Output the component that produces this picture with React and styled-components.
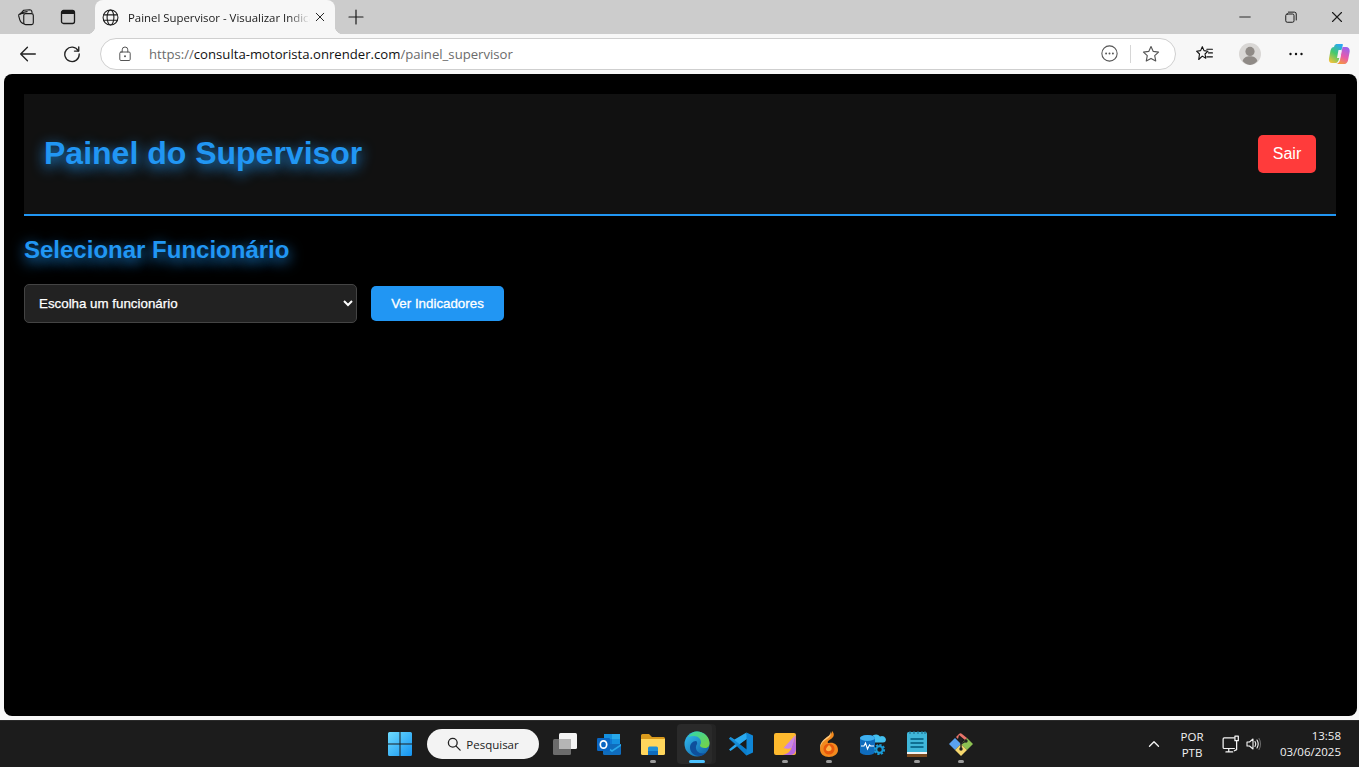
import React from "react";
import styled, { createGlobalStyle } from "styled-components";

const GlobalStyle = createGlobalStyle`
  html, body {
    margin: 0;
    padding: 0;
    height: 100%;
    overflow: hidden;
    background: #f7f7f7;
  }
  * { box-sizing: border-box; }
`;

const Desktop = styled.div`
  width: 100%;
  height: 100vh;
  display: flex;
  flex-direction: column;
  font-family: "Open Sans", "Noto Sans", sans-serif;
`;

/* browser chrome */
const TabStrip = styled.div`
  height: 34px;
  flex: none;
  display: flex;
  align-items: center;
  background: #cccccc;
`;

const StripLeft = styled.div`
  display: flex;
  align-items: center;
  gap: 10px;
  padding-left: 10px;
  margin-right: 11px;
`;

const IconSlot = styled.div`
  width: ${(p) => p.$w || 32}px;
  height: ${(p) => p.$h || 32}px;
  margin-left: ${(p) => p.$ml || 0}px;
  flex: none;
  display: flex;
  align-items: center;
  justify-content: center;
`;

const Tab = styled.div`
  position: relative;
  align-self: flex-end;
  width: 240px;
  height: 34px;
  display: flex;
  align-items: center;
  padding: 0 5px 0 6px;
  background: #f7f7f7;
  border-radius: 8px 8px 0 0;

  &::before,
  &::after {
    content: "";
    position: absolute;
    bottom: 0;
    width: 8px;
    height: 8px;
  }
  &::before {
    left: -8px;
    background: radial-gradient(circle at 0 0, transparent 8px, #f7f7f7 8.5px);
  }
  &::after {
    right: -8px;
    background: radial-gradient(circle at 100% 0, transparent 8px, #f7f7f7 8.5px);
  }
`;

const TabTitle = styled.div`
  flex: 1;
  margin-left: 9px;
  font-size: 11.4px;
  color: #1a1a1a;
  white-space: nowrap;
  overflow: hidden;
  -webkit-mask-image: linear-gradient(to right, #000 88%, transparent 100%);
  mask-image: linear-gradient(to right, #000 88%, transparent 100%);
`;

const WindowButtons = styled.div`
  margin-left: auto;
  margin-right: -1px;
  display: flex;
`;

const Toolbar = styled.div`
  height: 37px;
  flex: none;
  display: flex;
  align-items: center;
  background: #f7f7f7;
  padding: 2px 0 0 12px;
`;

const NavButtons = styled.div`
  display: flex;
  gap: 12px;
  margin-right: 12px;
`;

const AddressBar = styled.div`
  width: 1076px;
  height: 32px;
  flex: none;
  display: flex;
  align-items: center;
  background: #ffffff;
  border: 1px solid #cfcfcf;
  border-radius: 16px;
  padding: 0 15px 0 16px;
`;

const Url = styled.div`
  margin-left: 16px;
  font-size: 13.15px;
  color: #6b6b6b;
  white-space: nowrap;

  b {
    font-weight: 400;
    color: #111111;
  }
`;

const AddressActions = styled.div`
  margin-left: auto;
  display: flex;
  align-items: center;
  gap: 11.5px;
`;

const Divider = styled.div`
  width: 1px;
  height: 18px;
  background: #d6d6d6;
`;

const ToolActions = styled.div`
  display: flex;
  align-items: center;
  margin-left: 12px;
  gap: 14px;
`;

/* page */
const Viewport = styled.main`
  flex: 1;
  min-height: 0;
  margin: 3px 2px 4px 4px;
  padding: 20px 21px 20px 20px;
  background: #000000;
  border-radius: 8px;
  font-family: "Liberation Sans", Arial, sans-serif;
  color: #ffffff;
`;

const Header = styled.header`
  height: 122px;
  display: flex;
  align-items: center;
  justify-content: space-between;
  padding: 0 20px;
  background: #111111;
  border-bottom: 2px solid #2196f3;
`;

const Title = styled.h1`
  margin: 0 0 2px;
  font-size: 32px;
  font-weight: 700;
  color: #2196f3;
  text-shadow: 0 4px 14px #2196f3;
`;

const LogoutButton = styled.button`
  width: 58px;
  height: 38px;
  padding: 0;
  border: none;
  border-radius: 5px;
  background: #ff3b3b;
  color: #ffffff;
  font-family: inherit;
  font-size: 16px;
`;

const SectionTitle = styled.h2`
  margin: 20px 0 21px;
  font-size: 24px;
  line-height: 27px;
  font-weight: 700;
  color: #2196f3;
  text-shadow: 0 4px 14px #2196f3;
`;

const FilterRow = styled.form`
  display: flex;
  align-items: center;
  gap: 14px;
`;

const EmployeeSelect = styled.select`
  width: 333px;
  height: 39px;
  padding: 0 10px;
  background: #222222;
  color: #ffffff;
  border: 1px solid #444444;
  border-radius: 5px;
  font-family: inherit;
  font-size: 13.33px;
  -webkit-text-stroke: 0.25px #ffffff;
`;

const PrimaryButton = styled.button`
  width: 133px;
  height: 35px;
  border: none;
  border-radius: 5px;
  background: #2196f3;
  color: #ffffff;
  font-family: inherit;
  font-size: 13.33px;
  -webkit-text-stroke: 0.3px #ffffff;
`;

/* taskbar */
const Taskbar = styled.footer`
  position: relative;
  height: 47px;
  flex: none;
  display: flex;
  align-items: center;
  justify-content: flex-end;
  background: #1c1c1c;
  border-top: 1px solid #2b2b2b;
`;

const TaskIcons = styled.div`
  position: absolute;
  left: 378px;
  top: 0;
  height: 46px;
  display: flex;
  align-items: center;
`;

const TaskItem = styled.div`
  position: relative;
  width: 44px;
  height: 40px;
  display: flex;
  align-items: center;
  justify-content: center;

  &::before {
    content: "";
    display: ${(p) => (p.$active ? "block" : "none")};
    position: absolute;
    left: 2px;
    top: 0;
    bottom: 0;
    width: 35px;
    border-radius: 4px;
    background: #2a2a2a;
    box-shadow: 4px 0 0 #242424;
  }

  &::after {
    content: "";
    display: ${(p) => (p.$open || p.$active ? "block" : "none")};
    position: absolute;
    bottom: 1px;
    left: 50%;
    transform: translateX(-50%);
    width: ${(p) => (p.$active ? 16 : 6)}px;
    height: 3px;
    border-radius: 2px;
    background: ${(p) => (p.$active ? "#4cc2ff" : "#9a9a9a")};
  }

  svg {
    position: relative;
  }
`;

const SearchBox = styled.div`
  width: 112px;
  height: 30px;
  margin: 0 4px 0 5px;
  flex: none;
  display: flex;
  align-items: center;
  justify-content: center;
  gap: 5px;
  border-radius: 15px;
  background: #f3f3f3;
  color: #222222;
  font-size: 11.5px;
`;

const Tray = styled.div`
  display: flex;
  align-items: center;
  color: #f2f2f2;
  padding-right: 18px;
`;

const Lang = styled.div`
  width: 40px;
  margin-left: 12px;
  padding-top: 1px;
  text-align: center;
  font-size: 11.5px;
  line-height: 16px;
`;

const Clock = styled.div`
  width: 70px;
  margin-left: 9px;
  text-align: right;
  font-size: 11.5px;
  line-height: 16px;
`;

const stroke = { fill: "none", stroke: "currentColor", strokeWidth: 1.2, strokeLinecap: "round", strokeLinejoin: "round" };

const Svg = ({ size = 16, color = "#1a1a1a", children, box = 16 }) => (
  <svg width={size} height={size} viewBox={`0 0 ${box} ${box}`} style={{ color, display: "block" }}>
    {children}
  </svg>
);

const WorkspacesIcon = () => (
  <Svg size={18}>
    <g {...stroke} strokeWidth="1">
      <path d="M4.500 3.500 6 2l5.500-.5c.8 0 1.300.4 1.500 1l.4 1.500" />
      <path d="M2.800 5.500 3.600 4.200 9 3.200" />
      <rect x="6" y="5" width="8.500" height="9.800" rx="1.600" />
      <path d="M6 14c-1.700-.4-3-1.600-3.500-3.400L1.500 7c-.2-1 .3-1.600 1.200-1.800L6 4.600" />
    </g>
  </Svg>
);

const TabsIcon = () => (
  <Svg size={16}>
    <rect x="1.500" y="1.500" width="13" height="13" rx="2" fill="none" stroke="currentColor" strokeWidth="1.300" />
    <path d="M1.500 3.500a2 2 0 0 1 2-2h9a2 2 0 0 1 2 2v1.500h-13z" fill="currentColor" />
  </Svg>
);

const GlobeIcon = () => (
  <Svg size={17}>
    <g {...stroke} strokeWidth="1">
      <circle cx="8" cy="8" r="7" />
      <ellipse cx="8" cy="8" rx="3.200" ry="7" />
      <path d="M1.600 5.500h12.800M1.600 10.500h12.800" />
    </g>
  </Svg>
);

const CloseIcon = ({ size = 12 }) => (
  <Svg size={size}>
    <path d="M2 2l12 12M14 2 2 14" {...stroke} strokeWidth="1.500" />
  </Svg>
);

const PlusIcon = () => (
  <Svg size={16}>
    <path d="M8 1v14M1 8h14" {...stroke} />
  </Svg>
);

const BackIcon = () => (
  <Svg size={18} color="#222">
    <path d="M1.500 8h13M7.500 2 1.500 8l6 6" {...stroke} />
  </Svg>
);

const ReloadIcon = () => (
  <Svg size={18} color="#222">
    <path d="M13.600 5.200A6.400 6.400 0 1 0 14.400 8" {...stroke} />
    <path d="M14 1.600v3.800h-3.800" {...stroke} />
  </Svg>
);

const LockIcon = () => (
  <Svg size={16} color="#555">
    <g {...stroke} strokeWidth="1">
      <rect x="2.800" y="6" width="10.400" height="8.500" rx="1.200" />
      <path d="M5.200 6V3.800a2.800 2.800 0 0 1 5.600 0V6" />
    </g>
    <circle cx="8" cy="10.200" r="1" fill="currentColor" />
  </Svg>
);

const MoreCircleIcon = () => (
  <Svg size={17} color="#555">
    <circle cx="8" cy="8" r="7.200" {...stroke} strokeWidth="1" />
    <circle cx="4.800" cy="8" r=".9" fill="currentColor" />
    <circle cx="8" cy="8" r=".9" fill="currentColor" />
    <circle cx="11.200" cy="8" r=".9" fill="currentColor" />
  </Svg>
);

const StarIcon = () => (
  <Svg size={18} color="#555">
    <path d="M8 1.400l2 4.300 4.700.6-3.400 3.200.9 4.700L8 11.900l-4.200 2.300.9-4.700L1.300 6.300 6 5.700z" {...stroke} strokeWidth="1" />
  </Svg>
);

const FavoritesIcon = () => (
  <Svg size={18} color="#111">
    <path d="M6.500 1.500 8 5l3.600.5-2.700 2.500.7 3.700-3.100-1.800-3.200 3 .7-4.900L1.400 5.500 5 5z" {...stroke} strokeWidth="1" />
    <path d="M10.500 3.800h5M12 7h3.500M10.500 10.500h5" {...stroke} strokeWidth="1" />
  </Svg>
);

const ProfileIcon = () => (
  <svg width="22" height="22" viewBox="0 0 22 22" style={{ display: "block" }}>
    <circle cx="11" cy="11" r="11" fill="#d9d7d5" />
    <circle cx="11" cy="8.400" r="4.600" fill="#8f8a86" />
    <path d="M3.600 18c1-3.400 4-4.800 7.400-4.800s6.400 1.400 7.400 4.800A11 11 0 0 1 11 22a11 11 0 0 1-7.400-4z" fill="#8f8a86" />
  </svg>
);

const DotsIcon = () => (
  <Svg size={16} color="#111">
    <circle cx="2.500" cy="8" r="1.200" fill="currentColor" />
    <circle cx="8" cy="8" r="1.200" fill="currentColor" />
    <circle cx="13.500" cy="8" r="1.200" fill="currentColor" />
  </Svg>
);

const CopilotIcon = () => (
  <svg width="22" height="22" viewBox="0 0 22 22" style={{ display: "block" }}>
    <defs>
      <linearGradient id="cpL" x1="0.700" y1="0" x2="0.200" y2="1">
        <stop offset="0" stopColor="#2aa7f2" />
        <stop offset="0.500" stopColor="#45c96b" />
        <stop offset="1" stopColor="#f2c23a" />
      </linearGradient>
      <linearGradient id="cpR" x1="0.700" y1="0" x2="0.300" y2="1">
        <stop offset="0" stopColor="#9b62ee" />
        <stop offset="0.550" stopColor="#e85ba8" />
        <stop offset="1" stopColor="#f59a3a" />
      </linearGradient>
    </defs>
    <path d="M6.500 2.500C7 1.500 8 1 9 1h5c.8 0 1 .6.8 1.300L11 16c-.5 2-1.500 4-3.500 4H4C1.500 20 .5 18 1 15.500l1.500-8C3 5 4.500 4 6 4z" fill="url(#cpL)" />
    <path d="M14.500 4H18c2.500 0 4 2 3.700 4.500l-1.700 9c-.5 1.500-1.500 3.500-3.500 3.500H8c2 0 3.500-2 4-4z" fill="url(#cpR)" />
    <path d="M10.500 7h3l-1.500 8H9z" fill="#f6eef8" />
  </svg>
);

const MinIcon = () => (
  <Svg size={12}>
    <path d="M1 8h14" {...stroke} />
  </Svg>
);

const RestoreIcon = () => (
  <Svg size={12}>
    <g {...stroke} strokeWidth="1.300">
      <rect x="1" y="4" width="11" height="11" rx="2" />
      <path d="M4.500 1.500h8a2.500 2.500 0 0 1 2.500 2.500v8" />
    </g>
  </Svg>
);

const WindowsLogo = () => (
  <svg width="24" height="24" viewBox="0 0 24 24" style={{ display: "block" }}>
    <defs>
      <linearGradient id="winG" x1="0" y1="0" x2="1" y2="1">
        <stop offset="0" stopColor="#6fdcff" />
        <stop offset="1" stopColor="#1493f0" />
      </linearGradient>
    </defs>
    <path d="M0 1.500A1.500 1.500 0 0 1 1.500 0h10v11.500H0zM12.500 0h10A1.500 1.500 0 0 1 24 1.500v10H12.500zM0 12.500h11.500V24h-10A1.500 1.500 0 0 1 0 22.500zM12.500 12.500H24v10a1.500 1.500 0 0 1-1.500 1.500h-10z" fill="url(#winG)" />
  </svg>
);

const SearchIcon = () => (
  <Svg size={14} color="#222">
    <circle cx="6.600" cy="6.600" r="5" {...stroke} strokeWidth="1.500" />
    <path d="M10.400 10.400 15 15" {...stroke} strokeWidth="1.500" />
  </Svg>
);

const TaskViewIcon = () => (
  <svg width="24" height="22" viewBox="0 0 24 22" style={{ display: "block" }}>
    <rect x="0" y="6" width="18" height="16" rx="1.500" fill="#6b6b6b" />
    <rect x="6" y="0" width="18" height="16" rx="1.500" fill="#f4f4f4" />
    <rect x="6" y="6" width="12" height="10" fill="#b5b5b5" />
  </svg>
);

const OutlookIcon = () => (
  <svg width="24" height="24" viewBox="0 0 24 24" style={{ display: "block" }}>
    <rect x="7" y="2" width="16" height="10" fill="#1490df" />
    <rect x="15" y="2" width="8" height="5" fill="#28a8ea" />
    <rect x="7" y="7" width="8" height="6" fill="#0f78d4" />
    <path d="M6 12h18v9.500a1.500 1.500 0 0 1-1.500 1.500H7.500A1.500 1.500 0 0 1 6 21.500z" fill="#0f6cbd" />
    <path d="M6 12l9 6 9-6v2l-9 6-9-6z" fill="#28a8ea" />
    <rect x="0" y="6" width="13" height="13" rx="1.200" fill="#0a66c2" />
    <ellipse cx="6.500" cy="12.500" rx="3.200" ry="3.700" fill="none" stroke="#fff" strokeWidth="1.700" />
  </svg>
);

const ExplorerIcon = () => (
  <svg width="24" height="24" viewBox="0 0 24 24" style={{ display: "block" }}>
    <path d="M0 3.500A1.500 1.500 0 0 1 1.500 2H8l3 3h11.500A1.500 1.500 0 0 1 24 6.500V8H0z" fill="#d99a1c" />
    <path d="M0 7h24v14.500a1.500 1.500 0 0 1-1.500 1.500h-21A1.500 1.500 0 0 1 0 21.500z" fill="#ffd65c" />
    <path d="M7 16a1.500 1.500 0 0 1 1.500-1.500h7A1.500 1.500 0 0 1 17 16v7H7z" fill="#1f8fd8" />
    <rect x="7" y="19" width="10" height="4" fill="#0f6cbd" />
  </svg>
);

const EdgeIcon = () => (
  <svg width="26" height="26" viewBox="0 0 26 26" style={{ display: "block" }}>
    <defs>
      <linearGradient id="edA" x1="0" y1="0" x2="1" y2="1">
        <stop offset="0" stopColor="#35c1f1" />
        <stop offset="1" stopColor="#0c59a4" />
      </linearGradient>
      <linearGradient id="edB" x1="0" y1="0" x2="1" y2="1">
        <stop offset="0" stopColor="#2fd5b0" />
        <stop offset="1" stopColor="#7bd23c" />
      </linearGradient>
    </defs>
    <circle cx="13" cy="13" r="12.500" fill="url(#edA)" />
    <path d="M4 6C6.500 2.500 9.500.5 13 .5c6.500 0 12.500 5 12.500 11.500 0 2.500-1 5-4.500 5-3 0-5-1-5-2.500 0-1 1-1.500 1-3.500 0-3-3-6-7-6-2 0-4 .5-6 1z" fill="url(#edB)" />
    <path d="M12 10c-3.500 0-6 3-6 6.500 0 4.500 4 8.500 9 8.500 2.500 0 5-1 7-3-3 1-7 .5-9-2-1.500-2-1.500-5 0-7 .5-.8-.2-3-1-3z" fill="#0e4f9c" />
  </svg>
);

const VscodeIcon = () => (
  <svg width="24" height="24" viewBox="0 0 24 24" style={{ display: "block" }}>
    <path d="M17.500.5 24 3.500v17l-6.500 3-10-10 10-11.500zm0 6.500L10.500 12l7 5.500z" fill="#0f86d6" />
    <path d="M17.500.5V7L5 16.500l-3.500 2.500L0 17.500 6.500 12 0 6.500 1.500 5l4 2.500z" fill="#29a9ef" />
    <path d="M1.500 5 17.500 17.500V23.500L0 7z" fill="#0a77c2" opacity=".55" />
  </svg>
);

const StickyIcon = () => (
  <svg width="22" height="22" viewBox="0 0 22 22" style={{ display: "block" }}>
    <rect x="0" y="0" width="22" height="22" rx="2" fill="#fdb92e" />
    <path d="M21.500 2 22 16c0 3-2 6-5 6H9c4-1 7-3 8.500-7z" fill="#b668e0" />
    <path d="M21.500 2 17.500 15c-2 1-5 1-8 0z" fill="#c985ea" />
  </svg>
);

const FlameIcon = () => (
  <svg width="22" height="26" viewBox="0 0 22 26" style={{ display: "block" }}>
    <path d="M14 0c3 3 2 6-1 8C9 10 9 12 11 12c4-1 9 1 9 7 0 4-4 7-9 7s-9-3-9-8c0-5 3-8 6-11 3-2 6-4 6-7z" fill="#f28a1e" />
    <path d="M12 0c1 3-1 5-3 6C5 9 2 12 2 17c1-4 3-7 7-9 3-2 5-4 3-8z" fill="#ffc97a" />
    <circle cx="11" cy="18" r="5.500" fill="#e8590c" />
    <path d="M11 14c2 1.500 3 3 2.500 4.500S10 21 8.500 19.500 9 16 11 14z" fill="#ffb347" />
  </svg>
);

const AzureIcon = () => (
  <svg width="26" height="26" viewBox="0 0 26 26" style={{ display: "block" }}>
    <path d="M11 8a5 5 0 0 1 9-2.500A4 4 0 0 1 26 9a3 3 0 0 1-3 2.500H12z" fill="#43c0ef" />
    <path d="M0 7c0-1.500 3-3 7.500-3S15 5.500 15 7v14c0 1.500-3 3-7.500 3S0 22.500 0 21z" fill="#0f6cbd" />
    <ellipse cx="7.500" cy="7" rx="7.500" ry="3" fill="#3fb0ef" />
    <path d="M1 15h3l1.500-3 2 6 2-4 1 1h3.500" fill="none" stroke="#fff" strokeWidth="1.100" />
    <circle cx="19.500" cy="18.500" r="4.200" fill="none" stroke="#1a9bd7" strokeWidth="2.800" strokeDasharray="2 1.200" />
    <circle cx="19.500" cy="18.500" r="3.200" fill="none" stroke="#1a9bd7" strokeWidth="2" />
  </svg>
);

const NotepadIcon = () => (
  <svg width="20" height="26" viewBox="0 0 20 26" style={{ display: "block" }}>
    <rect x="0" y="1" width="20" height="22" rx="1.500" fill="#3fb6d9" />
    <rect x="0" y="22" width="20" height="4" fill="#7a4a20" />
    <rect x="0" y="21" width="20" height="2" fill="#f2f2f2" />
    <path d="M3 0v3M7 0v3M11 0v3M15 0v3M18 0v3" stroke="#1c6f8d" strokeWidth="1.100" />
    <path d="M3.500 8h13M3.500 12h13M3.500 16h13" stroke="#0f6f92" strokeWidth="1.800" />
  </svg>
);

const GitIcon = () => (
  <svg width="26" height="26" viewBox="0 0 26 26" style={{ display: "block" }}>
    <path d="M13 13 7 7 1 13l6 6z" fill="#5aa2f0" />
    <path d="M13 13l6-6 6 6-6 6z" fill="#8cc152" />
    <path d="M7 19l6-6 6 6-6 6z" fill="#f5d76e" />
    <path d="M8 6l3-3a2 2 0 0 1 3 0l5 4-2 2-6-5-1 4z" fill="#e8746a" />
    <path d="M13 9v10M13 13l5-3" stroke="#222" strokeWidth="1.400" fill="none" />
    <circle cx="13" cy="9" r="1.700" fill="#222" />
    <circle cx="13" cy="18" r="1.700" fill="#222" />
    <circle cx="18" cy="10" r="1.700" fill="#222" />
  </svg>
);

const CaretIcon = () => (
  <Svg size={12} color="#f2f2f2">
    <path d="M2 11l6-6 6 6" {...stroke} strokeWidth="1.800" />
  </Svg>
);

const NetworkIcon = () => (
  <Svg size={18} color="#f5f5f5">
    <g {...stroke} strokeWidth="1.100">
      <path d="M11 2.500H2a1 1 0 0 0-1 1v7.500a1 1 0 0 0 1 1h9" />
      <path d="M6 12v2.500M3.500 15h6" />
      <rect x="11.500" y="1" width="3" height="4" />
      <path d="M13 5v8l-2 1" />
    </g>
  </Svg>
);

const VolumeIcon = () => (
  <Svg size={16} color="#f5f5f5">
    <g {...stroke} strokeWidth="1.100">
      <path d="M1 6v4h2.500L7 13V3L3.500 6z" />
      <path d="M9 5.500c1 1.500 1 3.500 0 5M11 4c1.500 2.500 1.500 5.500 0 8" />
      <path d="M13 2.500c2 3 2 8 0 11" opacity=".35" />
    </g>
  </Svg>
);

const App = () => {
  return (
    <Desktop>
      <GlobalStyle />

      <TabStrip>
        <StripLeft>
          <IconSlot><WorkspacesIcon /></IconSlot>
          <IconSlot><TabsIcon /></IconSlot>
        </StripLeft>
        <Tab>
          <IconSlot $w={18}><GlobeIcon /></IconSlot>
          <TabTitle>Painel Supervisor - Visualizar Indicadores</TabTitle>
          <IconSlot $w={20}><CloseIcon size={10} /></IconSlot>
        </Tab>
        <IconSlot $ml={5}><PlusIcon /></IconSlot>
        <WindowButtons>
          <IconSlot $w={46}><MinIcon /></IconSlot>
          <IconSlot $w={46}><RestoreIcon /></IconSlot>
          <IconSlot $w={46}><CloseIcon /></IconSlot>
        </WindowButtons>
      </TabStrip>

      <Toolbar>
        <NavButtons>
          <IconSlot><BackIcon /></IconSlot>
          <IconSlot><ReloadIcon /></IconSlot>
        </NavButtons>
        <AddressBar>
          <LockIcon />
          <Url>https://<b>consulta-motorista.onrender.com</b>/painel_supervisor</Url>
          <AddressActions>
            <MoreCircleIcon />
            <Divider />
            <StarIcon />
          </AddressActions>
        </AddressBar>
        <ToolActions>
          <IconSlot><FavoritesIcon /></IconSlot>
          <IconSlot><ProfileIcon /></IconSlot>
          <IconSlot><DotsIcon /></IconSlot>
          <IconSlot $w={26}><CopilotIcon /></IconSlot>
        </ToolActions>
      </Toolbar>

      <Viewport>
        <Header>
          <Title>Painel do Supervisor</Title>
          <LogoutButton type="button">Sair</LogoutButton>
        </Header>
        <SectionTitle>Selecionar Funcionário</SectionTitle>
        <FilterRow onSubmit={(e) => e.preventDefault()}>
          <EmployeeSelect defaultValue="">
            <option value="">Escolha um funcionário</option>
          </EmployeeSelect>
          <PrimaryButton type="submit">Ver Indicadores</PrimaryButton>
        </FilterRow>
      </Viewport>

      <Taskbar>
        <TaskIcons>
          <TaskItem><WindowsLogo /></TaskItem>
          <SearchBox>
            <SearchIcon />
            Pesquisar
          </SearchBox>
          <TaskItem><TaskViewIcon /></TaskItem>
          <TaskItem><OutlookIcon /></TaskItem>
          <TaskItem $open><ExplorerIcon /></TaskItem>
          <TaskItem $active><EdgeIcon /></TaskItem>
          <TaskItem><VscodeIcon /></TaskItem>
          <TaskItem $open><StickyIcon /></TaskItem>
          <TaskItem $open><FlameIcon /></TaskItem>
          <TaskItem><AzureIcon /></TaskItem>
          <TaskItem $open><NotepadIcon /></TaskItem>
          <TaskItem $open><GitIcon /></TaskItem>
        </TaskIcons>
        <Tray>
          <CaretIcon />
          <Lang>POR<br />PTB</Lang>
          <IconSlot $w={18} $h={18} $ml={10}><NetworkIcon /></IconSlot>
          <IconSlot $w={16} $h={16} $ml={6}><VolumeIcon /></IconSlot>
          <Clock>13:58<br />03/06/2025</Clock>
        </Tray>
      </Taskbar>
    </Desktop>
  );
};

export default App;
